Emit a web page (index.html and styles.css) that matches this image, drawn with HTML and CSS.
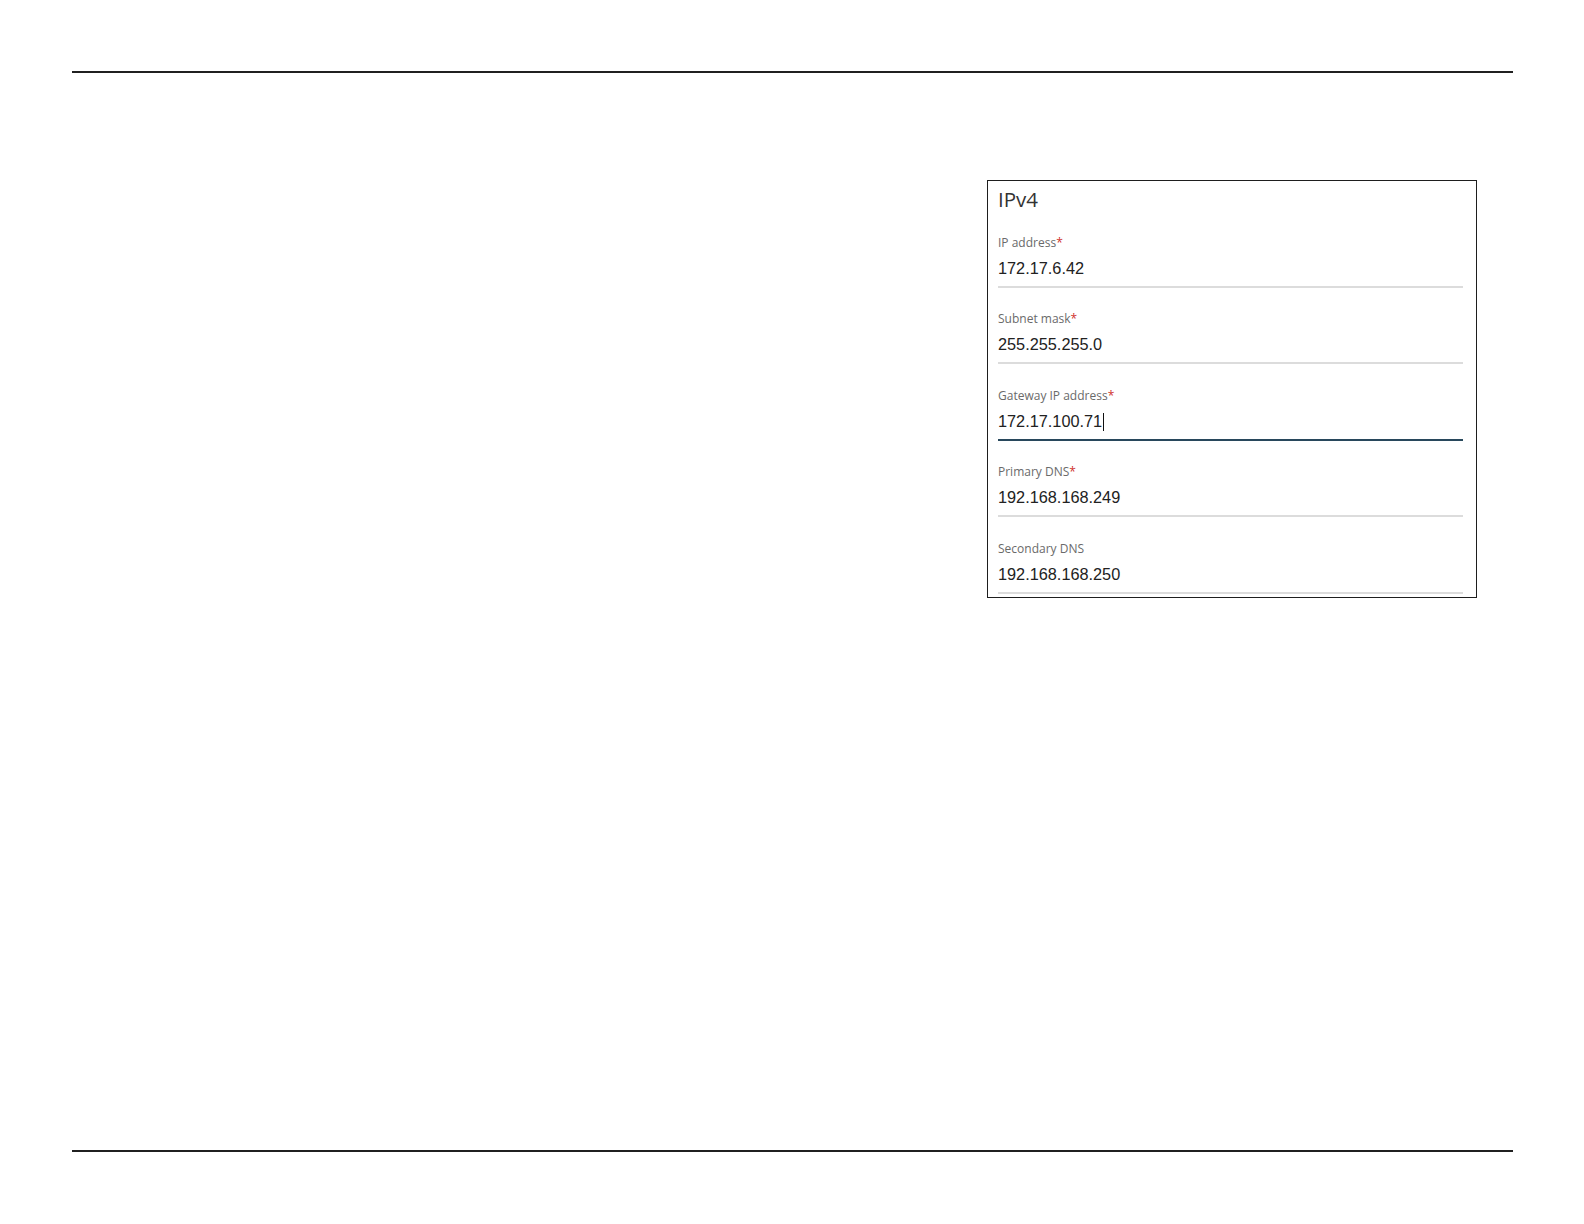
FILE: index.html
```html
<!DOCTYPE html>
<html lang="en">
<head>
<meta charset="utf-8">
<title>IPv4</title>
<link rel="stylesheet" href="styles.css">
</head>
<body>
<div class="page">
  <div class="rule"></div>
  <main class="main">
    <div class="spacer"></div>
    <section class="card">
      <h2 class="card-title">IPv4</h2>
      <div class="field">
        <div class="label">IP address<span class="req">*</span></div>
        <div class="value">172.17.6.42</div>
      </div>
      <div class="field">
        <div class="label">Subnet mask<span class="req">*</span></div>
        <div class="value">255.255.255.0</div>
      </div>
      <div class="field active">
        <div class="label">Gateway IP address<span class="req">*</span></div>
        <div class="value">172.17.100.71<span class="caret"></span></div>
      </div>
      <div class="field">
        <div class="label">Primary DNS<span class="req">*</span></div>
        <div class="value">192.168.168.249</div>
      </div>
      <div class="field">
        <div class="label">Secondary DNS</div>
        <div class="value">192.168.168.250</div>
      </div>
    </section>
  </main>
  <div class="rule"></div>
</div>
</body>
</html>
```
FILE: styles.css
```css
html, body {
  margin: 0;
  padding: 0;
  background: #ffffff;
}

.page {
  box-sizing: border-box;
  height: 1224px;
  padding: 71px 71px 72px 72px;
  display: flex;
  flex-direction: column;
}

.rule {
  height: 2px;
  background: #202020;
  flex: none;
}

.main {
  flex: 1;
  display: grid;
  grid-template-columns: 915px 490px;
  align-items: start;
  padding-top: 107px;
}

.card {
  box-sizing: border-box;
  border: 1px solid #1e1e1e;
  padding: 6px 13px 3px 10px;
}

.card-title {
  margin: 0;
  font-family: "Open Sans", "Noto Sans", sans-serif;
  font-weight: 400;
  font-size: 20.5px;
  line-height: 24px;
  color: #333333;
}

.field {
  box-sizing: border-box;
  height: 76.5px;
  padding-top: 23.5px;
  border-bottom: 2px solid #dcdcdc;
}

.field.active {
  border-bottom-color: #28485c;
}

.label {
  font-family: "Open Sans", "Noto Sans", sans-serif;
  font-size: 12px;
  line-height: 16px;
  color: #6a6a6a;
  white-space: nowrap;
}

.req {
  color: #d0312d;
}

.value {
  margin-top: 6px;
  font-family: "Liberation Sans", Arial, sans-serif;
  font-size: 16.3px;
  line-height: 22px;
  color: #222222;
  white-space: nowrap;
}

.caret {
  display: inline-block;
  width: 1px;
  height: 18px;
  background: #111111;
  vertical-align: -4px;
  margin-left: 1px;
}
```
